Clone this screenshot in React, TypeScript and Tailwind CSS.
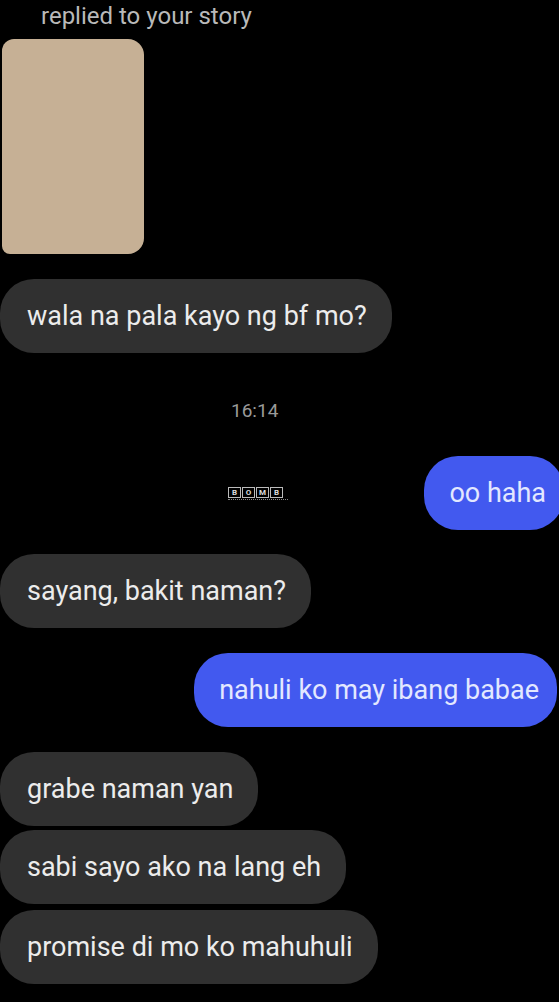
const font = { fontFamily: 'Roboto, "Noto Sans", sans-serif' };

function Incoming({ text, className = '' }: { text: string; className?: string }) {
    return (
        <div className={`flex ${className}`}>
            <div className="h-[74px] flex items-center pl-[27px] pr-[25px] bg-[#303030] rounded-[34px] text-[27px] text-[#ececec]">
                {text}
            </div>
        </div>
    );
}

function Outgoing({ text }: { text: string }) {
    return (
        <div className="h-[74px] flex items-center pl-[25px] pr-[18px] bg-[#4259ef] rounded-[34px] text-[27px] text-[#e3e8ff]">
            {text}
        </div>
    );
}

export default function App() {
    return (
        <div className="w-[559px] h-[1002px] bg-black overflow-hidden flex flex-col" style={font}>
            <div className="pl-[41px] h-[33px] leading-[32px] text-[24px] text-[#b9b9b9]">replied to your story</div>

            <div className="mt-[6px] ml-[2px] w-[142px] h-[215px] bg-[#c6b095] rounded-tl-[12px] rounded-bl-[8px] rounded-r-[16px]" />

            <Incoming text="wala na pala kayo ng bf mo?" className="mt-[25px]" />

            <div className="mt-[46px] pl-[231px] h-[24px] leading-[24px] text-[19px] text-[#9a9a9a]">16:14</div>

            {/* outgoing row with watermark */}
            <div className="mt-[33px] flex items-center">
                <div className="ml-[228px] flex flex-col items-start gap-[1px]">
                    <div className="flex gap-[1px]">
                        {['B', 'O', 'M', 'B'].map((c, i) => (
                            <span
                                key={i}
                                className="w-[13px] h-[11px] border border-[#bbbbbb] text-[8px] leading-[9px] text-center text-[#dddddd] font-bold"
                            >
                                {c}
                            </span>
                        ))}
                    </div>
                    <div className="w-[60px] h-px border-t border-dotted border-[#888888]" />
                </div>
                <div className="ml-auto -mr-[5px]">
                    <Outgoing text="oo haha" />
                </div>
            </div>

            <Incoming text="sayang, bakit naman?" className="mt-[24px]" />

            <div className="mt-[25px] flex justify-end pr-[2px]">
                <Outgoing text="nahuli ko may ibang babae" />
            </div>

            <Incoming text="grabe naman yan" className="mt-[25px]" />
            <Incoming text="sabi sayo ako na lang eh" className="mt-[4px]" />
            <Incoming text="promise di mo ko mahuhuli" className="mt-[6px]" />
        </div>
    );
}
